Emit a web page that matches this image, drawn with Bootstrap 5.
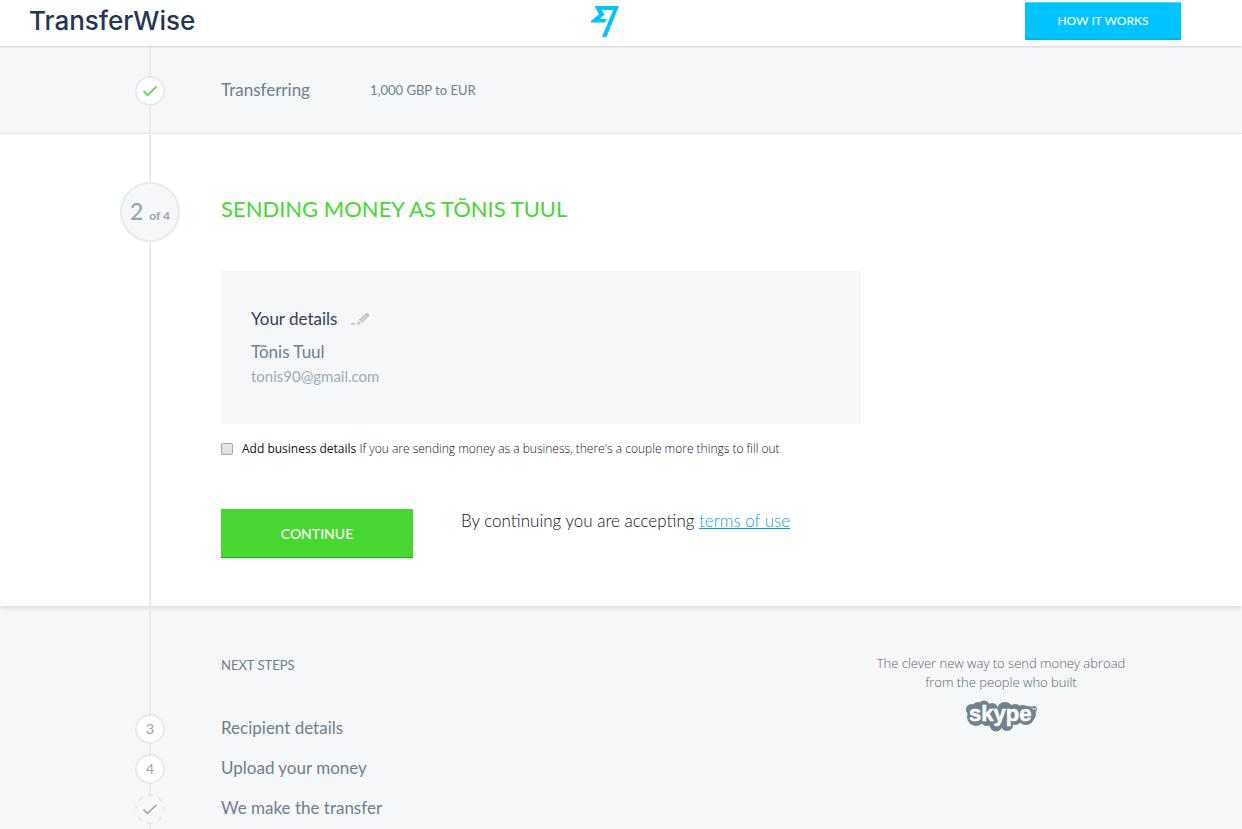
<!DOCTYPE html>
<html lang="en">
<head>
<meta charset="utf-8">
<meta name="viewport" content="width=device-width, initial-scale=1">
<title>TransferWise</title>
<link rel="stylesheet" href="https://cdn.jsdelivr.net/npm/bootstrap@5.3.0/dist/css/bootstrap.min.css">
<style>
:root { --line:#e6ebed; --pale:#f5f7f9; --slate:#6f808b; --mist:#a0aab4; --navy:#253454; --green:#48d633; --blue:#00c4ff; }
body { font-family:Lato,"Open Sans",sans-serif; font-size:17px; line-height:28px; color:var(--slate); background:var(--pale); }
.site-head { display:grid; grid-template-columns:1fr auto 1fr; align-items:center; height:46px; padding:0 61px 4px 29px; position:relative; z-index:2; box-shadow:0 1px 2px rgba(0,0,0,.15); }
.wordmark { font:500 26px/42px Inter,sans-serif; color:var(--navy); text-decoration:none; }
.btn-how { width:156px; height:38px; padding:0; border:0; border-top:1px solid #55d6ff; border-bottom:2px solid #00b3e8; border-radius:0; background:var(--blue); color:#fff; font-size:12px; font-weight:500; }
.btn-how:hover { background:#00b3e8; color:#fff; }
.flow { max-width:1040px; margin:0 auto; }
.rail { flex:0 0 120px; position:relative; padding-right:22px; display:flex; flex-direction:column; align-items:center; }
.rail::before { content:""; position:absolute; top:0; bottom:0; left:48px; width:2px; background:var(--line); }
.dot { position:relative; width:30px; height:30px; flex:none; border:2px solid var(--line); border-radius:50%; background:#fff; color:#98a4ae; font-size:14px; display:flex; align-items:center; justify-content:center; }
.dot-lg { width:60px; height:60px; background:var(--pale); align-items:baseline; font-size:12px; font-weight:700; line-height:54px; gap:6px; }
.dot-lg b { font-size:23px; font-weight:500; }
.dot-end { border:0; background:var(--pale); }
.done { height:88px; border-bottom:1px solid #eceff1; }
.done .rail { padding-top:3px; }
.done .summary { padding-top:1px; }
.done .summary > :first-child { width:149px; }
.fs-small { font-size:13px; line-height:20px; }
.col-main { flex:0 1 640px; min-width:0; }
.panel { background:#fff; box-shadow:0 2px 5px rgba(0,0,0,.12); }
.panel .rail { padding-top:48px; }
.panel .col-main { padding:60px 0 48px; }
h1 { font-size:22px; line-height:30px; font-weight:400; color:var(--green); margin:0 0 47px; }
.details { background:var(--pale); padding:34px 30px 37px; margin-bottom:15px; }
.details h2 { font-size:17px; line-height:28px; color:#35405a; font-weight:400; margin:0 0 5px; }
.edit { margin-left:14px; }
.email { font-size:15px; line-height:21px; color:var(--mist); }
.business { font:12px/20px "Open Sans",sans-serif; margin-bottom:50px; }
.business label { padding-left:9px; }
.tick { appearance:none; width:12px; height:12px; margin:0; flex:none; border:1px solid #a6a6a6; border-radius:2px; background:linear-gradient(#e9e9e9,#dcdcdc); }
.tick:checked { background:var(--green); }
.ink { color:#111118; }
.btn-go { width:192px; height:49px; padding:0; border:0; border-bottom:1px solid #2ba81d; border-radius:0; background:var(--green); color:#fff; font-size:14px; font-weight:500; flex:none; box-shadow:0 1px 2px rgba(0,0,0,.15); }
.btn-go:hover { background:#3cc428; color:#fff; }
.terms { line-height:24px; }
.terms a { color:#0f9be0; }
.next-list li { height:40px; line-height:38px; }
.next-list .rail { justify-content:center; }
.next-title { padding:49px 0 34px; }
.built { flex:0 0 280px; padding:48px 12px 0; font:300 13px/19px "Open Sans",sans-serif; color:#56666f; }
@media (max-width:900px) { .built { display:none; } .rail { flex-basis:100px; padding-right:2px; } }
</style>
</head>
<body>
<header class="site-head bg-white">
  <a class="wordmark" href="#">TransferWise</a>
  <a href="#" aria-label="Home" class="d-block lh-1"><svg class="d-block" width="28" height="32" viewBox="0 -1 28 32" fill="#00c4ff"><path d="M3.5 0H28L15.5 31H11L22.2 4H10.6L13.6 8.6L8.4 13H15.5L14 16.5H0V14.8L8 8.6Z"/></svg></a>
  <button type="button" class="btn btn-how ms-auto">HOW IT WORKS</button>
</header>

<main>
  <section class="done">
    <div class="flow d-flex h-100">
      <div class="rail justify-content-center"><span class="dot"><svg width="14" height="10" viewBox="0 0 14 10" fill="none" stroke="#48d633" stroke-width="1.5"><path d="M.5 5L4.5 9.2L13.5.6"/></svg></span></div>
      <div class="summary d-flex align-items-center">
        <span>Transferring</span>
        <span class="fs-small">1,000 GBP to EUR</span>
      </div>
    </div>
  </section>

  <section class="panel">
    <div class="flow d-flex">
      <div class="rail"><span class="dot dot-lg"><b>2</b>of 4</span></div>
      <form class="col-main">
        <h1>SENDING MONEY AS TÕNIS TUUL</h1>
        <div class="details">
          <h2 class="d-flex align-items-center">Your details
            <a href="#" aria-label="Edit details" class="edit lh-1"><svg class="d-block" width="20" height="14" viewBox="0 0 20 14" fill="#bfc2c4"><path d="M0 11H4.5V12.5H0ZM6.2 13L7 8.7L10 11.8Z"/><path d="M7.9 7.8L14.8 1.2Q15.7.4 16.7 1.3L17.9 2.6Q18.6 3.5 17.8 4.3L10.9 10.9Z"/><path d="M9.8 8.8L15.6 3.3" stroke="#f5f7f9" stroke-width=".8"/></svg></a>
          </h2>
          <div>Tõnis Tuul</div>
          <div class="email">tonis90@gmail.com</div>
        </div>
        <div class="business d-flex align-items-center ink">
          <input class="tick" type="checkbox" id="business">
          <label for="business">Add business details <span class="fw-light">If you are sending money as a business, there's a couple more things to fill out</span></label>
        </div>
        <div class="d-flex gap-5">
          <button type="submit" class="btn btn-go">CONTINUE</button>
          <p class="terms ink fw-light mb-0">By continuing you are accepting <a href="#">terms of use</a></p>
        </div>
      </form>
    </div>
  </section>

  <section>
    <div class="flow d-flex">
      <div class="flex-grow-1">
        <div class="d-flex"><div class="rail"></div><h2 class="fs-small next-title mb-0 fw-normal">NEXT STEPS</h2></div>
        <ul class="next-list list-unstyled mb-0">
          <li class="d-flex"><div class="rail"><span class="dot">3</span></div>Recipient details</li>
          <li class="d-flex"><div class="rail"><span class="dot">4</span></div>Upload your money</li>
          <li class="d-flex"><div class="rail"><span class="dot dot-end"><svg width="30" height="30" viewBox="0 0 30 30" fill="none"><circle cx="15" cy="15" r="14" stroke="#e6ebed" stroke-width="2" stroke-dasharray="5.5 5.5" stroke-dashoffset="2.7"/><path d="M8.5 15.5L12.5 19.5L21.5 10.8" stroke="#98a4ae" stroke-width="1.5"/></svg></span></div>We make the transfer</li>
        </ul>
      </div>
      <div class="built text-center">
        The clever new way to send money abroad from the people who built
        <svg class="d-block mx-auto mt-2" width="72" height="32" viewBox="0 0 72 32" role="img" aria-label="skype">
          <g fill="#70838d"><circle cx="6.5" cy="9.5" r="5.5"/><circle cx="13" cy="8" r="6"/><circle cx="19" cy="6" r="5.500"/><circle cx="27" cy="9" r="6"/><circle cx="40" cy="10" r="8"/><circle cx="50" cy="10" r="6"/><circle cx="58" cy="13" r="8"/><circle cx="63" cy="14" r="8"/><circle cx="11" cy="17" r="9"/><circle cx="22" cy="19" r="7"/><circle cx="31" cy="25" r="6.5"/><circle cx="42" cy="25" r="6"/><circle cx="50" cy="18" r="7"/><circle cx="61" cy="17" r="8"/><rect x="8" y="8" width="54" height="15"/><circle cx="69" cy="9" r="3"/></g>
          <text x="4" y="21" font-family="Liberation Sans, sans-serif" font-size="22" font-weight="700" fill="#fff" stroke="#fff" stroke-width=".5">skype</text>
          <path d="M67.200 8h1.600M68 8v2.200M69.300 10.200V8l.8 1.100l.8-1.100v2.200" stroke="#fff" stroke-width=".5" fill="none"/>
        </svg>
      </div>
    </div>
  </section>
</main>
<script src="https://cdn.jsdelivr.net/npm/bootstrap@5.3.0/dist/js/bootstrap.bundle.min.js"></script>
</body>
</html>
